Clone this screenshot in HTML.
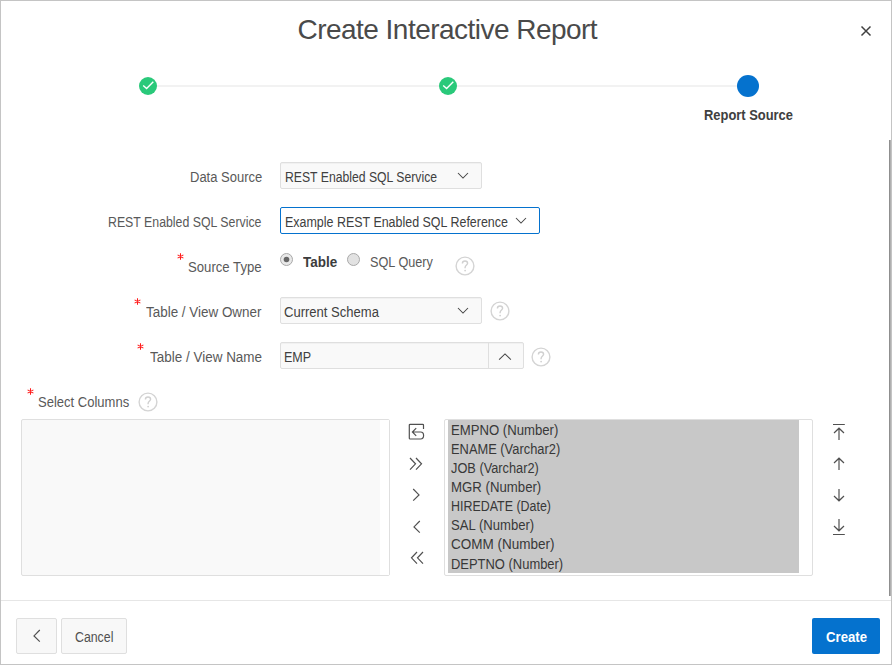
<!DOCTYPE html>
<html><head><meta charset="utf-8"><style>
html,body{margin:0;padding:0;width:892px;height:665px;overflow:hidden;background:#fff;}
body{position:relative;font-family:"Liberation Sans",sans-serif;}
.frame{position:absolute;left:0;top:0;width:890px;height:663px;border:1px solid #c4c4c4;}
.t{position:absolute;white-space:nowrap;}
.a{position:absolute;}
.box{border:1px solid #dfdfdf;border-radius:2px;background:#f9f9f9;box-shadow:inset 0 1px 1px rgba(0,0,0,.035);}
.btn{border:1px solid #dfdfdf;border-radius:2px;background:#f8f8f8;}
</style></head><body>
<div class="frame"></div>
<div class="t" style="left:297.50px;top:12.50px;font-size:28px;line-height:34px;color:#4a4a4a;letter-spacing:-0.529px;">Create Interactive Report</div>
<svg class="a" style="left:860px;top:25px" width="12" height="12" viewBox="0 0 12 12"><path d="M1.5 1.5L10.5 10.5M10.5 1.5L1.5 10.5" stroke="#404040" stroke-width="1.45" fill="none"/></svg>
<div class="a" style="left:157px;top:85px;width:580px;height:2px;background:#f2f2f2"></div>
<svg class="a" style="left:139px;top:77px" width="18" height="18" viewBox="0 0 18 18"><circle cx="9" cy="9" r="9" fill="#2ac97a"/><path d="M4.2 8.4L7.6 11.6L14.3 4.8" stroke="#fff" stroke-width="1.4" fill="none"/></svg>
<svg class="a" style="left:439px;top:77px" width="18" height="18" viewBox="0 0 18 18"><circle cx="9" cy="9" r="9" fill="#2ac97a"/><path d="M4.2 8.4L7.6 11.6L14.3 4.8" stroke="#fff" stroke-width="1.4" fill="none"/></svg>
<svg class="a" style="left:737px;top:75px" width="22" height="22" viewBox="0 0 22 22"><circle cx="11" cy="11" r="11" fill="#0572ce"/></svg>
<div class="t" style="left:704.00px;top:106.00px;font-size:13.8px;line-height:20px;color:#404040;font-weight:bold;transform:scaleX(0.9360);transform-origin:0 0;">Report Source</div>
<div class="t" style="left:189.50px;top:168.00px;font-size:13.8px;line-height:20px;color:#595959;transform:scaleX(0.9425);transform-origin:0 0;">Data Source</div>
<div class="t" style="left:107.70px;top:213.00px;font-size:13.8px;line-height:20px;color:#595959;transform:scaleX(0.8934);transform-origin:0 0;">REST Enabled SQL Service</div>
<div class="t" style="left:188.30px;top:258.00px;font-size:13.8px;line-height:20px;color:#595959;transform:scaleX(0.9530);transform-origin:0 0;">Source Type</div>
<div class="t" style="left:146.20px;top:303.00px;font-size:13.8px;line-height:20px;color:#595959;transform:scaleX(0.9736);transform-origin:0 0;">Table / View Owner</div>
<div class="t" style="left:149.70px;top:348.00px;font-size:13.8px;line-height:20px;color:#595959;transform:scaleX(0.9765);transform-origin:0 0;">Table / View Name</div>
<div class="t" style="left:38.20px;top:393.00px;font-size:13.8px;line-height:20px;color:#595959;transform:scaleX(0.9437);transform-origin:0 0;">Select Columns</div>
<svg class="a" style="left:177.0px;top:252.6px" width="7" height="7" viewBox="0 0 7 7"><path d="M3.5 0.3V6.7M0.6 1.9L6.4 5.1M6.4 1.9L0.6 5.1" stroke="#ff1a1a" stroke-width="1.05" fill="none"/></svg>
<svg class="a" style="left:133.6px;top:298.3px" width="7" height="7" viewBox="0 0 7 7"><path d="M3.5 0.3V6.7M0.6 1.9L6.4 5.1M6.4 1.9L0.6 5.1" stroke="#ff1a1a" stroke-width="1.05" fill="none"/></svg>
<svg class="a" style="left:137.2px;top:342.9px" width="7" height="7" viewBox="0 0 7 7"><path d="M3.5 0.3V6.7M0.6 1.9L6.4 5.1M6.4 1.9L0.6 5.1" stroke="#ff1a1a" stroke-width="1.05" fill="none"/></svg>
<svg class="a" style="left:26.7px;top:388.3px" width="7" height="7" viewBox="0 0 7 7"><path d="M3.5 0.3V6.7M0.6 1.9L6.4 5.1M6.4 1.9L0.6 5.1" stroke="#ff1a1a" stroke-width="1.05" fill="none"/></svg>
<div class="a box" style="left:280px;top:162px;width:200px;height:25px"></div>
<div class="t" style="left:285.30px;top:168.00px;font-size:13.8px;line-height:20px;color:#404040;transform:scaleX(0.8852);transform-origin:0 0;">REST Enabled SQL Service</div>
<svg class="a" style="left:457.0px;top:172.1px" width="12" height="7" viewBox="0 0 12 7"><path d="M1 1L6 6L11 1" stroke="#454545" stroke-width="1.05" fill="none"/></svg>
<div class="a" style="left:280px;top:207px;width:258px;height:25px;border:1px solid #0572ce;border-radius:2px;background:#fff"></div>
<div class="t" style="left:285.00px;top:213.00px;font-size:13.8px;line-height:20px;color:#404040;transform:scaleX(0.9028);transform-origin:0 0;">Example REST Enabled SQL Reference</div>
<svg class="a" style="left:514.6px;top:217.1px" width="12" height="7" viewBox="0 0 12 7"><path d="M1 1L6 6L11 1" stroke="#454545" stroke-width="1.05" fill="none"/></svg>
<svg class="a" style="left:280px;top:253px" width="13" height="13" viewBox="0 0 13 13"><circle cx="6.5" cy="6.5" r="6" fill="#e8e8e8" stroke="#a8a8a8" stroke-width="1"/><circle cx="6.5" cy="6.5" r="2.8" fill="#666"/></svg>
<div class="t" style="left:303.20px;top:253.00px;font-size:13.8px;line-height:20px;color:#3c3c3c;font-weight:bold;transform:scaleX(0.9766);transform-origin:0 0;">Table</div>
<svg class="a" style="left:347px;top:253px" width="13" height="13" viewBox="0 0 13 13"><circle cx="6.5" cy="6.5" r="6" fill="#e2e2e2" stroke="#a8a8a8" stroke-width="1"/></svg>
<div class="t" style="left:370.30px;top:253.00px;font-size:13.8px;line-height:20px;color:#595959;transform:scaleX(0.9180);transform-origin:0 0;">SQL Query</div>
<svg class="a" style="left:454.5px;top:255.8px" width="20" height="20" viewBox="0 0 20 20"><circle cx="10" cy="10" r="8.9" fill="none" stroke="#d4d4d4" stroke-width="1.4"/><path d="M7.4 7.6C7.4 5.9 8.6 5 10 5C11.5 5 12.6 6 12.6 7.3C12.6 8.9 10.1 9.3 10.1 11.6V12.3" stroke="#d0d0d0" stroke-width="1.4" fill="none"/><circle cx="10.1" cy="14.6" r="0.9" fill="#d0d0d0"/></svg>
<div class="a box" style="left:280px;top:297px;width:200px;height:25px"></div>
<div class="t" style="left:283.80px;top:303.00px;font-size:13.8px;line-height:20px;color:#404040;transform:scaleX(0.9455);transform-origin:0 0;">Current Schema</div>
<svg class="a" style="left:456.5px;top:307.0px" width="12" height="7" viewBox="0 0 12 7"><path d="M1 1L6 6L11 1" stroke="#454545" stroke-width="1.05" fill="none"/></svg>
<svg class="a" style="left:490.0px;top:301.0px" width="20" height="20" viewBox="0 0 20 20"><circle cx="10" cy="10" r="8.9" fill="none" stroke="#d4d4d4" stroke-width="1.4"/><path d="M7.4 7.6C7.4 5.9 8.6 5 10 5C11.5 5 12.6 6 12.6 7.3C12.6 8.9 10.1 9.3 10.1 11.6V12.3" stroke="#d0d0d0" stroke-width="1.4" fill="none"/><circle cx="10.1" cy="14.6" r="0.9" fill="#d0d0d0"/></svg>
<div class="a box" style="left:280px;top:342px;width:242px;height:25px"></div>
<div class="a" style="left:488px;top:342px;width:1px;height:27px;background:#dfdfdf"></div>
<div class="t" style="left:283.60px;top:348.00px;font-size:13.8px;line-height:20px;color:#404040;transform:scaleX(0.9095);transform-origin:0 0;">EMP</div>
<svg class="a" style="left:498px;top:352.8px" width="14" height="8" viewBox="0 0 14 8"><path d="M1.1 6.6L7 0.9L12.9 6.6" stroke="#454545" stroke-width="1.05" fill="none"/></svg>
<svg class="a" style="left:531.0px;top:347.0px" width="20" height="20" viewBox="0 0 20 20"><circle cx="10" cy="10" r="8.9" fill="none" stroke="#d4d4d4" stroke-width="1.4"/><path d="M7.4 7.6C7.4 5.9 8.6 5 10 5C11.5 5 12.6 6 12.6 7.3C12.6 8.9 10.1 9.3 10.1 11.6V12.3" stroke="#d0d0d0" stroke-width="1.4" fill="none"/><circle cx="10.1" cy="14.6" r="0.9" fill="#d0d0d0"/></svg>
<svg class="a" style="left:137.5px;top:391.5px" width="20" height="20" viewBox="0 0 20 20"><circle cx="10" cy="10" r="8.9" fill="none" stroke="#d4d4d4" stroke-width="1.4"/><path d="M7.4 7.6C7.4 5.9 8.6 5 10 5C11.5 5 12.6 6 12.6 7.3C12.6 8.9 10.1 9.3 10.1 11.6V12.3" stroke="#d0d0d0" stroke-width="1.4" fill="none"/><circle cx="10.1" cy="14.6" r="0.9" fill="#d0d0d0"/></svg>
<div class="a" style="left:21px;top:419px;width:367px;height:155px;border:1px solid #dfdfdf;border-radius:2px;background:#f9f9f9"></div>
<div class="a" style="left:380px;top:420px;width:9px;height:155px;background:#fff"></div>
<div class="a" style="left:444px;top:419px;width:367px;height:155px;border:1px solid #dfdfdf;border-radius:2px;background:#fff"></div>
<div class="a" style="left:448px;top:420px;width:351px;height:153px;background:#c8c8c8"></div>
<div class="t" style="left:451.20px;top:421.00px;font-size:13.8px;line-height:20px;color:#383838;transform:scaleX(0.9528);transform-origin:0 0;">EMPNO (Number)</div>
<div class="t" style="left:451.20px;top:440.00px;font-size:13.8px;line-height:20px;color:#383838;transform:scaleX(0.9327);transform-origin:0 0;">ENAME (Varchar2)</div>
<div class="t" style="left:451.20px;top:459.00px;font-size:13.8px;line-height:20px;color:#383838;transform:scaleX(0.9258);transform-origin:0 0;">JOB (Varchar2)</div>
<div class="t" style="left:451.20px;top:478.00px;font-size:13.8px;line-height:20px;color:#383838;transform:scaleX(0.9575);transform-origin:0 0;">MGR (Number)</div>
<div class="t" style="left:451.20px;top:497.00px;font-size:13.8px;line-height:20px;color:#383838;transform:scaleX(0.9015);transform-origin:0 0;">HIREDATE (Date)</div>
<div class="t" style="left:451.20px;top:516.00px;font-size:13.8px;line-height:20px;color:#383838;transform:scaleX(0.9489);transform-origin:0 0;">SAL (Number)</div>
<div class="t" style="left:451.20px;top:535.00px;font-size:13.8px;line-height:20px;color:#383838;transform:scaleX(0.9792);transform-origin:0 0;">COMM (Number)</div>
<div class="t" style="left:451.20px;top:555.00px;font-size:13.8px;line-height:20px;color:#383838;transform:scaleX(0.9380);transform-origin:0 0;">DEPTNO (Number)</div>
<svg class="a" style="left:408px;top:423px" width="17" height="17" viewBox="0 0 17 17"><path d="M15.5 6V2.2Q15.5 1.3 14.6 1.3H2.2Q1.3 1.3 1.3 2.2V15.2Q1.3 16 2.2 16H12.6Q15.6 16 15.6 12.6Q15.6 9 12.6 9H4.5M8.2 5.2L4.4 9L8.2 12.8" stroke="#505050" stroke-width="1.2" fill="none"/></svg>
<svg class="a" style="left:409px;top:457px" width="15" height="14" viewBox="0 0 15 14"><path d="M1 1L6.5 6.8L1 12.6M7 1L12.5 6.8L7 12.6" stroke="#505050" stroke-width="1.2" fill="none"/></svg>
<svg class="a" style="left:412px;top:488px" width="9" height="14" viewBox="0 0 9 14"><path d="M1.2 1L7 6.9L1.2 12.7" stroke="#505050" stroke-width="1.2" fill="none"/></svg>
<svg class="a" style="left:412px;top:520px" width="9" height="14" viewBox="0 0 9 14"><path d="M7.8 1L2 6.9L7.8 12.7" stroke="#505050" stroke-width="1.2" fill="none"/></svg>
<svg class="a" style="left:410px;top:551px" width="15" height="14" viewBox="0 0 15 14"><path d="M7 1L1.5 6.8L7 12.6M13 1L7.5 6.8L13 12.6" stroke="#505050" stroke-width="1.2" fill="none"/></svg>
<svg class="a" style="left:832px;top:423px" width="14" height="18" viewBox="0 0 14 18"><path d="M1 1.5H12.8M7 5.5V17M2 10L7 5.2L12 10" stroke="#505050" stroke-width="1.2" fill="none"/></svg>
<svg class="a" style="left:832px;top:457px" width="14" height="14" viewBox="0 0 14 14"><path d="M7 1.5V13M2 6L7 1.2L12 6" stroke="#505050" stroke-width="1.2" fill="none"/></svg>
<svg class="a" style="left:832px;top:488px" width="14" height="14" viewBox="0 0 14 14"><path d="M7 1V12.5M2 8L7 12.8L12 8" stroke="#505050" stroke-width="1.2" fill="none"/></svg>
<svg class="a" style="left:832px;top:518px" width="14" height="18" viewBox="0 0 14 18"><path d="M1 16.5H12.8M7 1V12.5M2 8L7 12.8L12 8" stroke="#505050" stroke-width="1.2" fill="none"/></svg>
<div class="a" style="left:1px;top:600px;width:890px;height:1px;background:#e6e6e6"></div>
<div class="a btn" style="left:16px;top:618px;width:39px;height:34px"></div>
<svg class="a" style="left:32px;top:629px" width="9" height="14" viewBox="0 0 9 14"><path d="M7.8 1L2 6.9L7.8 12.7" stroke="#505050" stroke-width="1.2" fill="none"/></svg>
<div class="a btn" style="left:61px;top:618px;width:64px;height:34px"></div>
<div class="t" style="left:74.90px;top:628.00px;font-size:13.8px;line-height:20px;color:#505050;transform:scaleX(0.8939);transform-origin:0 0;">Cancel</div>
<div class="a" style="left:812px;top:618px;width:68px;height:36px;background:#0572ce;border-radius:2px"></div>
<div class="t" style="left:825.90px;top:628.00px;font-size:13.8px;line-height:20px;color:#fff;font-weight:bold;transform:scaleX(0.9544);transform-origin:0 0;">Create</div>
<div class="a" style="left:889px;top:140px;width:1px;height:456px;background:#8f8f8f"></div>
<div class="a" style="left:890px;top:140px;width:1px;height:456px;background:#b0b0b0"></div>
</body></html>
